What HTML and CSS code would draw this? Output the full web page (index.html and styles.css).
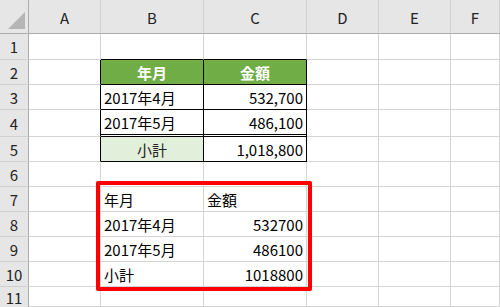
FILE: index.html
```html
<!DOCTYPE html>
<html lang="ja">
<head>
<meta charset="utf-8">
<link rel="stylesheet" href="styles.css">
</head>
<body>
<div class="sheet">
  <div class="grid">
    <div class="corner"><span class="tri"></span></div>
    <div class="ch">A</div><div class="ch">B</div><div class="ch">C</div><div class="ch">D</div><div class="ch">E</div><div class="ch last">F</div>

    <div class="rh">1</div><div class="c"></div><div class="c tt"></div><div class="c tt"></div><div class="c"></div><div class="c"></div><div class="c"></div>

    <div class="rh">2</div><div class="c tl"></div><div class="c g tb">年月</div><div class="c g tb">金額</div><div class="c"></div><div class="c"></div><div class="c"></div>

    <div class="rh">3</div><div class="c tl"></div><div class="c tb">2017年4月</div><div class="c tb r">532,700</div><div class="c"></div><div class="c"></div><div class="c"></div>

    <div class="rh">4</div><div class="c tl"></div><div class="c tb dbl">2017年5月</div><div class="c tb dbl r">486,100</div><div class="c"></div><div class="c"></div><div class="c"></div>

    <div class="rh">5</div><div class="c tl"></div><div class="c tb sub ctr">小計</div><div class="c tb r">1,018,800</div><div class="c"></div><div class="c"></div><div class="c"></div>

    <div class="rh">6</div><div class="c"></div><div class="c"></div><div class="c"></div><div class="c"></div><div class="c"></div><div class="c"></div>

    <div class="rh">7</div><div class="c"></div><div class="c">年月</div><div class="c">金額</div><div class="c"></div><div class="c"></div><div class="c"></div>

    <div class="rh">8</div><div class="c"></div><div class="c">2017年4月</div><div class="c r">532700</div><div class="c"></div><div class="c"></div><div class="c"></div>

    <div class="rh">9</div><div class="c"></div><div class="c">2017年5月</div><div class="c r">486100</div><div class="c"></div><div class="c"></div><div class="c"></div>

    <div class="rh">10</div><div class="c"></div><div class="c">小計</div><div class="c r">1018800</div><div class="c"></div><div class="c"></div><div class="c"></div>

    <div class="rh lastrow">11</div><div class="c"></div><div class="c"></div><div class="c"></div><div class="c"></div><div class="c"></div><div class="c"></div>
  </div>
  <div class="highlight"></div>
</div>
</body>
</html>
```

FILE: styles.css
```css
html, body {
  margin: 0;
  padding: 0;
  background: #ffffff;
}
body {
  width: 500px;
  height: 307px;
  overflow: hidden;
  font-family: "Noto Sans CJK JP", "Noto Sans", sans-serif;
  font-size: 15px;
  color: #000;
}
.sheet {
  position: relative;
  width: 500px;
  height: 307px;
  overflow: hidden;
}
.grid {
  display: grid;
  grid-template-columns: 29px 72px 103px 103px 72px 72px 49px;
  grid-template-rows: 34px 26px 25px 25px 27px 25px 25px 25px 25px 25px 25px 20px;
}
.grid > div {
  box-sizing: border-box;
  display: flex;
  align-items: center;
  white-space: nowrap;
  overflow: hidden;
  line-height: 1;
}
.corner {
  background: #e6e6e6;
  border-right: 1px solid #ababab;
  border-bottom: 1px solid #ababab;
  position: relative;
}
.tri {
  position: absolute;
  right: 3px;
  bottom: 4px;
  width: 0;
  height: 0;
  border-left: 17px solid transparent;
  border-bottom: 17px solid #b5b5b5;
}
.ch {
  background: #e6e6e6;
  border-right: 1px solid #d0d0d0;
  border-bottom: 1px solid #ababab;
  justify-content: center;
  color: #222;
  font-size: 15px;
  padding-top: 2px;
}
.rh {
  background: #e6e6e6;
  border-right: 1px solid #ababab;
  border-bottom: 1px solid #d0d0d0;
  justify-content: center;
  color: #222;
  font-size: 15px;
}
.lastrow {
  align-items: flex-start !important;
  padding-top: 3px;
  border-bottom: none;
}
.c {
  border-right: 1px solid #d4d4d4;
  border-bottom: 1px solid #d4d4d4;
  padding: 0 3px;
}
.r { justify-content: flex-end; }
.ctr { justify-content: center; }
.tt { border-bottom-color: #000 !important; }
.tl { border-right-color: #000 !important; }
.tb {
  border-right-color: #000;
  border-bottom-color: #000;
}
.g {
  background: #70ad47;
  color: #fff;
  font-weight: bold;
  justify-content: center;
}
.dbl {
  border-bottom: 3px double #000;
}
.sub {
  background: #e2efda;
  color: #222;
}
.highlight {
  position: absolute;
  left: 96px;
  top: 181px;
  width: 216px;
  height: 110px;
  box-sizing: border-box;
  border: 4px solid #ff0000;
  border-radius: 2px;
}
```
